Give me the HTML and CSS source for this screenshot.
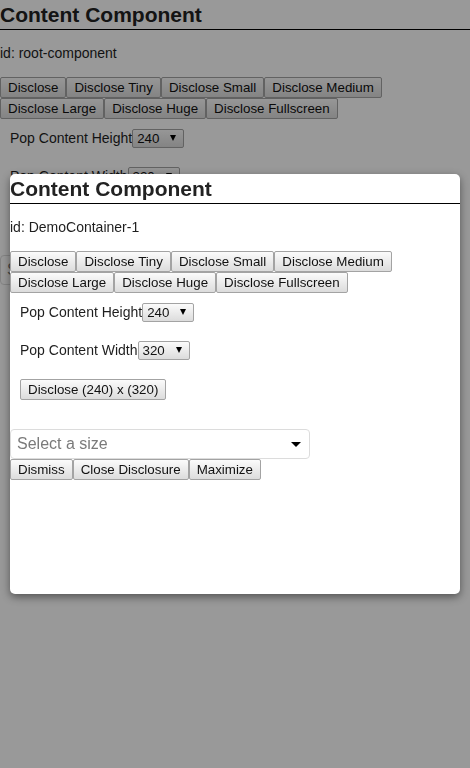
FILE: index.html
```html
<!DOCTYPE html>
<html>
<head>
<meta charset="utf-8">
<link rel="stylesheet" href="styles.css">
</head>
<body>
<div class="cc">
  <h2 class="title">Content Component</h2>
  <p class="id">id: root-component</p>
  <div class="btns">
    <button class="btn">Disclose</button><button class="btn">Disclose Tiny</button><button class="btn">Disclose Small</button><button class="btn">Disclose Medium</button><button class="btn">Disclose Large</button><button class="btn">Disclose Huge</button><button class="btn">Disclose Fullscreen</button>
  </div>
  <div class="row row1"><span class="lbl">Pop Content Height</span><span class="sel"><select><option>240</option></select></span></div>
  <div class="row row2"><span class="lbl">Pop Content Width</span><span class="sel"><select><option>320</option></select></span></div>
  <div class="row row3"><button class="btn">Disclose (240) x (320)</button></div>
  <div class="sizebox"><span class="ph">Select a size</span><span class="caret"></span></div>
</div>
<div class="overlay"></div>
<div class="modal">
  <div class="cc">
    <h2 class="title">Content Component</h2>
    <p class="id">id: DemoContainer-1</p>
    <div class="btns">
      <button class="btn">Disclose</button><button class="btn">Disclose Tiny</button><button class="btn">Disclose Small</button><button class="btn">Disclose Medium</button><button class="btn">Disclose Large</button><button class="btn">Disclose Huge</button><button class="btn">Disclose Fullscreen</button>
    </div>
    <div class="row row1"><span class="lbl">Pop Content Height</span><span class="sel"><select><option>240</option></select></span></div>
    <div class="row row2"><span class="lbl">Pop Content Width</span><span class="sel"><select><option>320</option></select></span></div>
    <div class="row row3"><button class="btn">Disclose (240) x (320)</button></div>
    <div class="sizebox"><span class="ph">Select a size</span><span class="caret"></span></div>
    <div class="btns"><button class="btn">Dismiss</button><button class="btn">Close Disclosure</button><button class="btn">Maximize</button></div>
  </div>
</div>
</body>
</html>
```
FILE: styles.css
```css
html, body {
  margin: 0;
  padding: 0;
  height: 100%;
}
body {
  background: #fff;
  font-family: "Liberation Sans", Arial, sans-serif;
  color: #1e1e1e;
}
.cc {
  display: flex;
  flex-direction: column;
  align-items: flex-start;
}
.title {
  align-self: stretch;
  margin: 0;
  padding: 3px 0 2px;
  font-size: 21px;
  line-height: 24px;
  font-weight: 700;
  color: #222;
  border-bottom: 1px solid #000;
}
.id {
  margin: 14px 0 15px;
  font-size: 14px;
  line-height: 18px;
}
.btns {
  display: flex;
  flex-wrap: wrap;
}
.btn {
  font-family: "Liberation Sans", Arial, sans-serif;
  font-size: 13.333px;
  line-height: 15px;
  color: #111;
  padding: 2px 7px;
  margin: 0;
  border: 1px solid #a3a3a3;
  border-radius: 2px;
  background: linear-gradient(#fbfbfb, #dcdcdc);
}
.row {
  display: flex;
  align-items: center;
  padding-left: 10px;
}
.row1 { margin-top: 10px; }
.row2 { margin-top: 19px; }
.row3 { margin-top: 19px; }
.lbl {
  font-size: 14px;
  line-height: 19px;
}
.sel {
  position: relative;
  display: inline-block;
}
.sel select {
  appearance: none;
  -webkit-appearance: none;
  width: 52px;
  height: 19px;
  margin: 0;
  padding: 0 0 0 4px;
  font-family: "Liberation Sans", Arial, sans-serif;
  font-size: 13.333px;
  line-height: 17px;
  color: #111;
  border: 1px solid #a3a3a3;
  border-radius: 2px;
  background: linear-gradient(#fbfbfb, #dcdcdc);
}
.sel::after {
  content: "";
  position: absolute;
  right: 8px;
  top: 6px;
  border-left: 3px solid transparent;
  border-right: 3px solid transparent;
  border-top: 6px solid #000;
  pointer-events: none;
}
.sizebox {
  margin-top: 29px;
  width: 300px;
  height: 30px;
  box-sizing: border-box;
  border: 1px solid #dcdcdc;
  border-radius: 4px;
  background: #fff;
  display: flex;
  align-items: center;
  justify-content: space-between;
  padding: 0 8px 0 6px;
}
.ph {
  font-size: 16px;
  line-height: 18px;
  color: #7a7a7a;
}
.caret {
  width: 0;
  height: 0;
  border-left: 5px solid transparent;
  border-right: 5px solid transparent;
  border-top: 5px solid #000;
}
.overlay {
  position: fixed;
  inset: 0;
  background: rgba(0, 0, 0, 0.4);
}
.modal {
  position: absolute;
  left: 10px;
  top: 174px;
  width: 450px;
  height: 420px;
  background: #fff;
  border-radius: 5px;
  box-shadow: 0 3px 8px rgba(0, 0, 0, 0.45);
  overflow: hidden;
}
```
